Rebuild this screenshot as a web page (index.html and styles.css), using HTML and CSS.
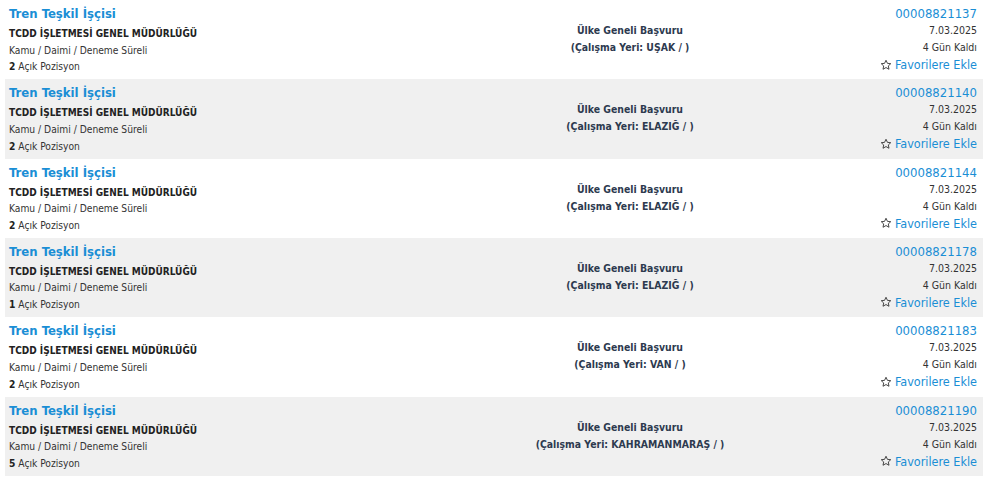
FILE: index.html
```html
<!DOCTYPE html>
<html lang="tr">
<head>
<meta charset="utf-8">
<title>İlanlar</title>
<link rel="stylesheet" href="styles.css">
</head>
<body>
<div class="list">
  <div class="row">
    <div class="col-left">
      <div class="title">Tren Teşkil İşçisi</div>
      <div class="org">TCDD İŞLETMESİ GENEL MÜDÜRLÜĞÜ</div>
      <div class="meta">Kamu / Daimi / Deneme Süreli</div>
      <div class="meta"><b>2</b> Açık Pozisyon</div>
    </div>
    <div class="col-mid">
      <div>Ülke Geneli Başvuru</div>
      <div>(Çalışma Yeri: UŞAK / )</div>
    </div>
    <div class="col-right">
      <div class="num">00008821137</div>
      <div class="date">7.03.2025</div>
      <div class="days">4 Gün Kaldı</div>
      <div class="fav"><svg class="star" viewBox="0 0 24 24"><path d="M12 2.5l2.9 6.2 6.6.7-4.9 4.5 1.4 6.6L12 17.1l-6 3.4 1.4-6.6-4.9-4.5 6.6-.7z"/></svg>Favorilere Ekle</div>
    </div>
  </div>
  <div class="row alt">
    <div class="col-left">
      <div class="title">Tren Teşkil İşçisi</div>
      <div class="org">TCDD İŞLETMESİ GENEL MÜDÜRLÜĞÜ</div>
      <div class="meta">Kamu / Daimi / Deneme Süreli</div>
      <div class="meta"><b>2</b> Açık Pozisyon</div>
    </div>
    <div class="col-mid">
      <div>Ülke Geneli Başvuru</div>
      <div>(Çalışma Yeri: ELAZIĞ / )</div>
    </div>
    <div class="col-right">
      <div class="num">00008821140</div>
      <div class="date">7.03.2025</div>
      <div class="days">4 Gün Kaldı</div>
      <div class="fav"><svg class="star" viewBox="0 0 24 24"><path d="M12 2.5l2.9 6.2 6.6.7-4.9 4.5 1.4 6.6L12 17.1l-6 3.4 1.4-6.6-4.9-4.5 6.6-.7z"/></svg>Favorilere Ekle</div>
    </div>
  </div>
  <div class="row">
    <div class="col-left">
      <div class="title">Tren Teşkil İşçisi</div>
      <div class="org">TCDD İŞLETMESİ GENEL MÜDÜRLÜĞÜ</div>
      <div class="meta">Kamu / Daimi / Deneme Süreli</div>
      <div class="meta"><b>2</b> Açık Pozisyon</div>
    </div>
    <div class="col-mid">
      <div>Ülke Geneli Başvuru</div>
      <div>(Çalışma Yeri: ELAZIĞ / )</div>
    </div>
    <div class="col-right">
      <div class="num">00008821144</div>
      <div class="date">7.03.2025</div>
      <div class="days">4 Gün Kaldı</div>
      <div class="fav"><svg class="star" viewBox="0 0 24 24"><path d="M12 2.5l2.9 6.2 6.6.7-4.9 4.5 1.4 6.6L12 17.1l-6 3.4 1.4-6.6-4.9-4.5 6.6-.7z"/></svg>Favorilere Ekle</div>
    </div>
  </div>
  <div class="row alt">
    <div class="col-left">
      <div class="title">Tren Teşkil İşçisi</div>
      <div class="org">TCDD İŞLETMESİ GENEL MÜDÜRLÜĞÜ</div>
      <div class="meta">Kamu / Daimi / Deneme Süreli</div>
      <div class="meta"><b>1</b> Açık Pozisyon</div>
    </div>
    <div class="col-mid">
      <div>Ülke Geneli Başvuru</div>
      <div>(Çalışma Yeri: ELAZIĞ / )</div>
    </div>
    <div class="col-right">
      <div class="num">00008821178</div>
      <div class="date">7.03.2025</div>
      <div class="days">4 Gün Kaldı</div>
      <div class="fav"><svg class="star" viewBox="0 0 24 24"><path d="M12 2.5l2.9 6.2 6.6.7-4.9 4.5 1.4 6.6L12 17.1l-6 3.4 1.4-6.6-4.9-4.5 6.6-.7z"/></svg>Favorilere Ekle</div>
    </div>
  </div>
  <div class="row">
    <div class="col-left">
      <div class="title">Tren Teşkil İşçisi</div>
      <div class="org">TCDD İŞLETMESİ GENEL MÜDÜRLÜĞÜ</div>
      <div class="meta">Kamu / Daimi / Deneme Süreli</div>
      <div class="meta"><b>2</b> Açık Pozisyon</div>
    </div>
    <div class="col-mid">
      <div>Ülke Geneli Başvuru</div>
      <div>(Çalışma Yeri: VAN / )</div>
    </div>
    <div class="col-right">
      <div class="num">00008821183</div>
      <div class="date">7.03.2025</div>
      <div class="days">4 Gün Kaldı</div>
      <div class="fav"><svg class="star" viewBox="0 0 24 24"><path d="M12 2.5l2.9 6.2 6.6.7-4.9 4.5 1.4 6.6L12 17.1l-6 3.4 1.4-6.6-4.9-4.5 6.6-.7z"/></svg>Favorilere Ekle</div>
    </div>
  </div>
  <div class="row alt">
    <div class="col-left">
      <div class="title">Tren Teşkil İşçisi</div>
      <div class="org">TCDD İŞLETMESİ GENEL MÜDÜRLÜĞÜ</div>
      <div class="meta">Kamu / Daimi / Deneme Süreli</div>
      <div class="meta"><b>5</b> Açık Pozisyon</div>
    </div>
    <div class="col-mid">
      <div>Ülke Geneli Başvuru</div>
      <div>(Çalışma Yeri: KAHRAMANMARAŞ / )</div>
    </div>
    <div class="col-right">
      <div class="num">00008821190</div>
      <div class="date">7.03.2025</div>
      <div class="days">4 Gün Kaldı</div>
      <div class="fav"><svg class="star" viewBox="0 0 24 24"><path d="M12 2.5l2.9 6.2 6.6.7-4.9 4.5 1.4 6.6L12 17.1l-6 3.4 1.4-6.6-4.9-4.5 6.6-.7z"/></svg>Favorilere Ekle</div>
    </div>
  </div>
</div>
</body>
</html>
```

FILE: styles.css
```css
html, body {
  margin: 0;
  padding: 0;
  background: #ffffff;
}
body {
  font-family: "DejaVu Sans Condensed", "DejaVu Sans", sans-serif;
  color: #333333;
}
.list {
  padding: 0 3px 0 5px;
}
.row {
  display: grid;
  grid-template-columns: 505px 240px 1fr;
  height: 79.33px;
  box-sizing: border-box;
  background: #ffffff;
}
.row.alt {
  background: #f0f0f0;
}
.col-left {
  padding: 5px 0 0 4px;
}
.title {
  font-weight: bold;
  font-size: 13px;
  line-height: 18px;
  color: #1a8ed5;
  margin-bottom: 3px;
}
.org {
  font-weight: bold;
  font-size: 10px;
  line-height: 16.5px;
  color: #222222;
}
.meta {
  font-size: 10.2px;
  line-height: 16.7px;
  color: #333333;
}
.meta b {
  color: #222222;
}
.col-mid {
  padding-top: 22px;
  text-align: center;
  font-weight: bold;
  font-size: 10.4px;
  line-height: 17px;
  color: #2d3a4f;
}
.col-right {
  padding: 5px 6px 0 0;
  text-align: right;
}
.num {
  font-size: 13px;
  line-height: 17px;
  color: #1a8ed5;
}
.date {
  font-size: 10.5px;
  line-height: 17px;
  color: #333333;
}
.days {
  font-size: 10.5px;
  line-height: 17px;
  color: #333333;
}
.fav {
  font-size: 12.5px;
  line-height: 17px;
  color: #1a8ed5;
  display: flex;
  justify-content: flex-end;
  align-items: center;
  gap: 3px;
}
.star {
  width: 12px;
  height: 12px;
  fill: none;
  stroke: #333333;
  stroke-width: 1.8;
  stroke-linejoin: round;
}
```
